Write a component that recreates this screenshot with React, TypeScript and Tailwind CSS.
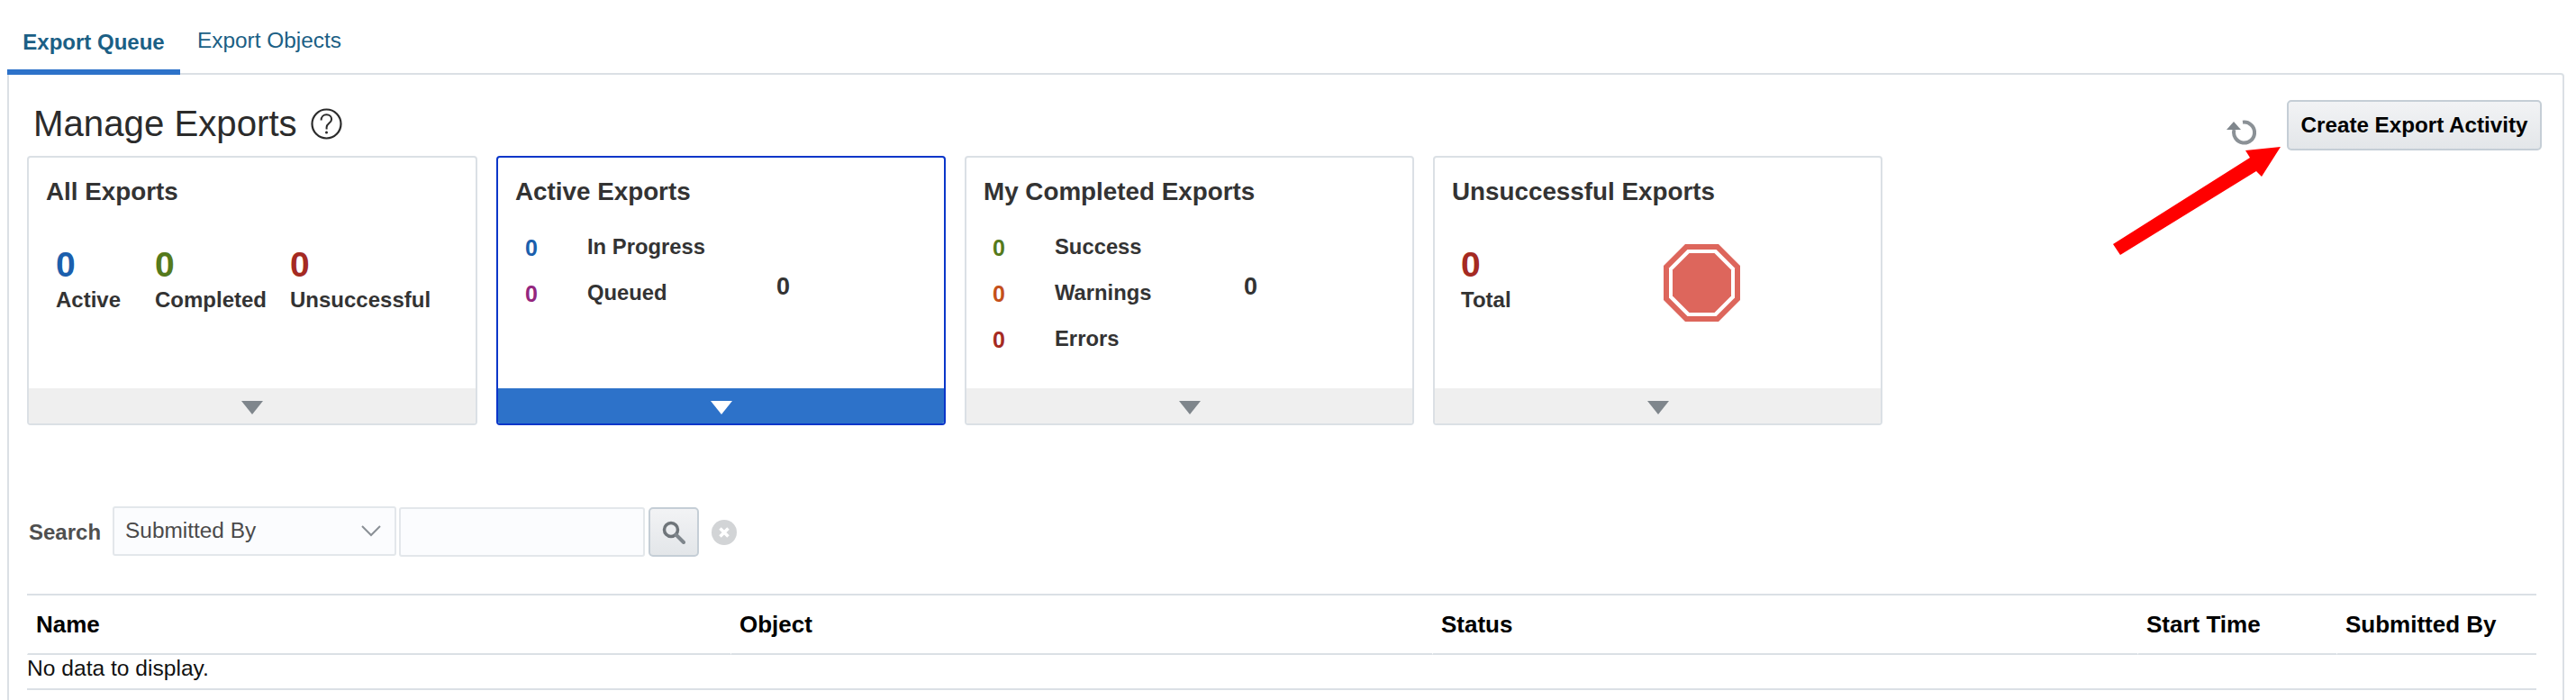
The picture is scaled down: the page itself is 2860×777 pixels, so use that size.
import React from "react";

const Chevron = ({ active }: { active?: boolean }) => (
  <svg width="24" height="15" viewBox="0 0 24 15">
    <polygon points="0,0 24,0 12,15" fill={active ? "#ffffff" : "#7f868c"} />
  </svg>
);

const Card = ({ title, active, wide, children }: { title: string; active?: boolean; wide?: boolean; children: React.ReactNode }) => (
  <div
    className={
      "flex h-[299px] flex-col overflow-hidden rounded-[4px] border-2 " +
      (wide ? "w-[500px] " : "w-[499px] ") +
      (active ? "border-[#0a36c9]" : "border-[#dbe0e5]")
    }
  >
    <div className="flex-1">
      <div className="pl-[19px] pt-[22px] text-[27.8px] leading-[32px] font-bold text-[#333333]">{title}</div>
      {children}
    </div>
    <div className={"flex h-[39px] items-center justify-center pt-[4px] " + (active ? "bg-[#2d72c9]" : "bg-[#efefef]")}>
      <Chevron active={active} />
    </div>
  </div>
);

const Big = ({ value, label, color, w }: { value: string; label: string; color: string; w: string }) => (
  <div className={w}>
    <div className={"text-[39px] leading-[40px] font-bold " + color}>{value}</div>
    <div className="mt-[5px] text-[24px] leading-[28px] font-bold text-[#333333]">{label}</div>
  </div>
);

const Row = ({ color, label }: { color: string; label: string }) => (
  <div className="flex h-[51px] items-center">
    <div className={"w-[69px] text-[25px] leading-[28px] font-bold " + color}>0</div>
    <div className="mb-[2px] text-[23.8px] leading-[28px] font-bold text-[#333333]">{label}</div>
  </div>
);

const cols = ["Name", "Object", "Status", "Start Time", "Submitted By"];

export default function App() {
  return (
    <div className="h-[777px] overflow-hidden bg-white font-['Liberation_Sans',Arial,sans-serif] text-[#333333]">
      <div className="relative z-10 -mb-[2px] flex h-[83px] pl-[8px]">
        <div className="flex w-[192px] items-start justify-center border-b-[6px] border-[#2d72c9] pt-[33px] text-[24px] leading-[28px] font-bold text-[#1b5f85]">
          Export Queue
        </div>
        <div className="pl-[19px] pt-[31px] text-[24.4px] leading-[28px] text-[#1b5f85]">Export Objects</div>
      </div>
      <div className="ml-[8px] mr-[13px] h-[800px] rounded-tr-[4px] border-2 border-[#dbe0e5]">
        <div className="flex h-[90px] items-start justify-between pl-[27px] pr-[23px] pt-[27px]">
          <div className="flex h-[55px] items-center gap-[15px]">
            <h1 className="text-[40.2px] leading-[55px] font-normal text-[#2b2b2b]">Manage Exports</h1>
            <svg width="35" height="35" viewBox="0 0 35 35" fill="none">
              <circle cx="17.500" cy="17.500" r="16" stroke="#2b2b2b" strokeWidth="2.200" />
              <path d="M11.600 13.400c0-3.800 2.600-6.200 5.900-6.200 3.300 0 5.600 2.300 5.600 5.200 0 4.300-5.500 4.400-5.500 8.800v2.200" stroke="#2b2b2b" strokeWidth="2" />
              <circle cx="17.500" cy="27" r="1.500" fill="#2b2b2b" />
            </svg>
          </div>
          <div className="flex items-start">
            <svg className="mr-[34px] mt-[23px]" width="33" height="28" viewBox="0 0 33 28" fill="none">
              <path d="M8.500 11A11.500 11.500 0 1 0 18 2.700" stroke="#8b9196" strokeWidth="4" />
              <polygon points="8,2 0,11 16,11" fill="#7f868c" />
            </svg>
            <button className="mt-[1px] h-[56px] w-[283px] rounded-[5px] border-2 border-[#c5ced6] bg-gradient-to-b from-[#f2f3f5] to-[#e3e6e9] text-[24.2px] font-bold text-black">
              Create Export Activity
            </button>
          </div>
        </div>

        <div className="ml-[20px] flex gap-[21px]">
          <Card title="All Exports" wide>
            <div className="flex pl-[30px] pt-[45px]">
              <Big value="0" label="Active" color="text-[#1b5fad]" w="w-[110px]" />
              <Big value="0" label="Completed" color="text-[#557a1c]" w="w-[150px]" />
              <Big value="0" label="Unsuccessful" color="text-[#a52a22]" w="w-[160px]" />
            </div>
          </Card>
          <Card title="Active Exports" active>
            <div className="flex pl-[30px] pt-[20px]">
              <div className="w-[279px]">
                <Row color="text-[#1b5fad]" label="In Progress" />
                <Row color="text-[#94267e]" label="Queued" />
              </div>
              <div className="mt-[54px] text-[27px] leading-[30px] font-bold text-[#333333]">0</div>
            </div>
          </Card>
          <Card title="My Completed Exports">
            <div className="flex pl-[29px] pt-[20px]">
              <div className="w-[279px]">
                <Row color="text-[#557a1c]" label="Success" />
                <Row color="text-[#c4501b]" label="Warnings" />
                <Row color="text-[#a52a22]" label="Errors" />
              </div>
              <div className="mt-[54px] text-[27px] leading-[30px] font-bold text-[#333333]">0</div>
            </div>
          </Card>
          <Card title="Unsuccessful Exports">
            <div className="flex pl-[29px] pt-[45px]">
              <Big value="0" label="Total" color="text-[#a52a22]" w="w-[225px]" />
              <svg className="-mt-[3px]" width="85" height="86" viewBox="0 0 85 86">
                <polygon points="24,0 61,0 85,24 85,62 61,86 24,86 0,62 0,24" fill="#dd665c" />
                <polygon points="26.500,6 58.500,6 79,26.500 79,59.500 58.500,80 26.500,80 6,59.500 6,26.500" fill="#ffffff" />
                <polygon points="28.500,10 56.500,10 75,28.500 75,57.500 56.500,76 28.500,76 10,57.500 10,28.500" fill="#dd665c" />
              </svg>
            </div>
          </Card>
        </div>

        <div className="ml-[22px] mt-[90px] flex h-[56px] items-start">
          <span className="mr-[13px] mt-[15px] text-[24px] leading-[28px] font-bold text-[#4f4f4f]">Search</span>
          <div className="flex h-[55px] w-[315px] items-center justify-between rounded-[3px] border-2 border-[#e3e7eb] bg-[#fbfcfe] pl-[12px] pr-[15px] pb-[1px]">
            <span className="text-[24.4px] leading-[30px] text-[#4a4a4a]">Submitted By</span>
            <svg width="22" height="14" viewBox="0 0 22 14" fill="none">
              <path d="M1 2l10 10L21 2" stroke="#8a9096" strokeWidth="2" />
            </svg>
          </div>
          <div className="ml-[3px] mt-[1px] h-[55px] w-[273px] rounded-[3px] border-2 border-[#e3e7eb] bg-[#fbfcfe]" />
          <button className="ml-[4px] mt-[1px] flex h-[55px] w-[56px] items-center justify-center rounded-[5px] border-2 border-[#c5ced6] bg-gradient-to-b from-[#f2f3f5] to-[#e3e6e9]">
            <svg width="26" height="26" viewBox="0 0 26 26" fill="none">
              <circle cx="10" cy="10" r="7.500" stroke="#6f757a" strokeWidth="3.500" />
              <path d="M15.500 15.500l8.500 8.500" stroke="#7f868c" strokeWidth="4" strokeLinecap="round" />
            </svg>
          </button>
          <svg className="ml-[14px] mt-[15px]" width="28" height="28" viewBox="0 0 28 28" fill="none">
            <circle cx="14" cy="14" r="14" fill="#d2d4d6" />
            <path d="M9.500 9.500l9 9M18.500 9.500l-9 9" stroke="#ffffff" strokeWidth="3.500" />
          </svg>
        </div>

        <div className="ml-[20px] mt-[41px] w-[2786px]">
          <div className="grid grid-cols-[781px_779px_783px_221px_222px] border-t-2 border-[#dbe0e5]">
            {cols.map((c) => (
              <div
                key={c}
                className="flex h-[66px] items-center border-b-2 border-l border-[#dbe0e5] border-l-white pl-[9px] text-[26px] font-bold text-black"
              >
                {c}
              </div>
            ))}
          </div>
          <div className="flex h-[39px] items-center border-b-2 border-[#dbe0e5] pb-[7px] text-[24.6px] text-[#111111]">
            No data to display.
          </div>
        </div>

        <svg className="absolute left-[2340px] top-[160px]" width="200" height="130" viewBox="2340 160 200 130">
          <polygon points="2346,271 2498,175 2493,167 2532,163 2511,196 2505,190 2354,283" fill="#ff0000" />
        </svg>
      </div>
    </div>
  );
}
